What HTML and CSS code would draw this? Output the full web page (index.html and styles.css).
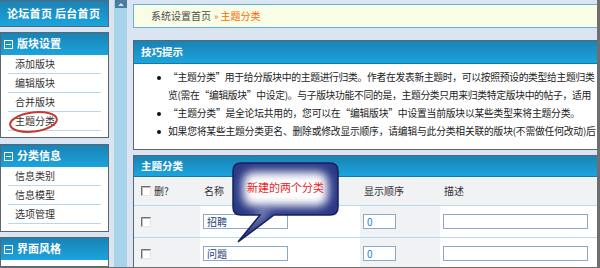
FILE: index.html
```html
<!DOCTYPE html>
<html lang="zh-CN">
<head>
  <meta charset="UTF-8">
  <title>主题分类 - 系统设置</title>
  <link rel="stylesheet" href="styles.css">
</head>
<body>
  <div class="frame">
    <aside class="side">
      <div class="topnav">论坛首页 后台首页</div>

      <div class="menu">
        <div class="menu-hd"><i class="fold"></i>版块设置</div>
        <ul class="menu-list">
          <li>添加版块</li>
          <li>编辑版块</li>
          <li>合并版块</li>
          <li>主题分类</li>
        </ul>
      </div>

      <div class="menu menu-short">
        <div class="menu-hd"><i class="fold"></i>分类信息</div>
        <ul class="menu-list">
          <li>信息类别</li>
          <li>信息模型</li>
          <li>选项管理</li>
        </ul>
      </div>

      <div class="menu">
        <div class="menu-hd"><i class="fold"></i>界面风格</div>
      </div>

      <!-- hand-drawn mark round the current item -->
      <svg class="mark" width="70" height="40" viewBox="0 0 70 40">
        <ellipse cx="33.5" cy="22" rx="23.5" ry="9.5" transform="rotate(-7 33.5 22)"
                 fill="none" stroke="#c43a30" stroke-width="2"/>
      </svg>
    </aside>

    <div class="split"><span class="split-bar"><i class="split-btn"></i></span></div>

    <main class="main">
      <div class="crumb">系统设置首页 <em><b>»</b> 主题分类</em></div>

      <div class="box">
        <div class="box-hd">技巧提示</div>
        <ul class="tips">
          <li class="long">“主题分类”用于给分版块中的主题进行归类。作者在发表新主题时，可以按照预设的类型给主题归类<br>览(需在“编辑版块”中设定)。与子版块功能不同的是，主题分类只用来归类特定版块中的帖子，适用</li>
          <li>“主题分类”是全论坛共用的，您可以在“编辑版块”中设置当前版块以某些类型来将主题分类。</li>
          <li>如果您将某些主题分类更名、删除或修改显示顺序，请编辑与此分类相关联的版块(不需做任何改动)后</li>
        </ul>
      </div>

      <div class="box box-table">
        <div class="box-hd">主题分类</div>
        <div class="grid">
          <div class="cell th"><span class="chk"></span>删?</div>
          <div class="cell th">名称</div>
          <div class="cell th">显示顺序</div>
          <div class="cell th">描述</div>

          <div class="cell alt"><span class="chk"></span></div>
          <div class="cell"><input class="ipt ipt-name" value="招聘"></div>
          <div class="cell alt"><input class="ipt ipt-num" value="0"></div>
          <div class="cell"><input class="ipt ipt-desc" value=""></div>

          <div class="cell alt"><span class="chk"></span></div>
          <div class="cell"><input class="ipt ipt-name" value="问题"></div>
          <div class="cell alt"><input class="ipt ipt-num" value="0"></div>
          <div class="cell"><input class="ipt ipt-desc" value=""></div>
        </div>
      </div>

      <div class="callout">
        <svg width="112" height="86" viewBox="0 0 112 86">
          <defs>
            <clipPath id="bubbleClip">
              <path id="bubblePath" d="M11 3H100Q108 3 108 11V47Q108 55 100 55H44L8 82L30 55H11Q3 55 3 47V11Q3 3 11 3Z"/>
            </clipPath>
            <filter id="soft" x="-30%" y="-30%" width="160%" height="160%">
              <feGaussianBlur stdDeviation="5"/>
            </filter>
          </defs>
          <use href="#bubblePath" fill="#2b3885"/>
          <g clip-path="url(#bubbleClip)">
            <rect x="13" y="12" width="85" height="34" rx="10" fill="#fff" filter="url(#soft)"/>
            <polygon points="32,50 40,50 16,74" fill="#c9cde8" filter="url(#soft)"/>
          </g>
          <use href="#bubblePath" fill="none" stroke="#18215c" stroke-width="1.5"/>
        </svg>
        <span class="callout-text">新建的两个分类</span>
      </div>
    </main>
  </div>
</body>
</html>
```

FILE: styles.css
```css
:root {
  --page: #dae5f1; --strip: #a7d4ea; --edge: #5b6670;
  --head-top: #1b82b4; --head-bot: #1aa4dd;
  --line: #b7d9ef; --cell: #f1f2f4;
  --text: #222; --muted: #4d4d4d; --orange: #ff6a00;
}

* { margin: 0; padding: 0; box-sizing: border-box; }

body {
  width: 600px; height: 268px; overflow: hidden;
  background: var(--page); color: var(--text);
  font: 10px/1.2 "Noto Sans CJK SC", "Liberation Sans", sans-serif;
}

.frame {
  display: flex; width: 600px; height: 268px; overflow: hidden;
  border-right: 3px solid #6e6e6e; border-bottom: 1px solid #6e6e6e;
}

/* sidebar */
.side {
  width: 110px; flex: none; position: relative;
  display: flex; flex-direction: column; gap: 5px;
}

.topnav {
  width: 109px; height: 27px; flex: none;
  display: flex; align-items: center; padding-left: 7px;
  background: linear-gradient(var(--head-top), var(--head-bot));
  border: 1px solid var(--edge); border-left: none;
  color: #fff; font-size: 11px; font-weight: 700; letter-spacing: 0.3px;
}

.menu {
  width: 109px; flex: none; background: #fff;
  border: 1px solid var(--edge); padding-bottom: 6px;
}
.menu-short { margin-top: 1px; padding-bottom: 7px; }

.menu-hd {
  height: 22px; display: flex; align-items: center; padding-left: 3px;
  background: linear-gradient(var(--head-top), var(--head-bot));
  color: #fff; font-size: 11px; font-weight: 700;
}

.fold {
  width: 9px; height: 9px; margin-right: 4px; border: 1px solid #fff;
  display: inline-flex; align-items: center; justify-content: center;
}
.fold::after { content: ''; width: 5px; height: 1px; background: #fff; }

.menu-list { list-style: none; }
.menu-list li {
  height: 19px; margin: 0 7px; padding-left: 7px;
  display: flex; align-items: center;
  border-bottom: 1px solid var(--line); color: #333;
}

.mark { position: absolute; left: 0; top: 100px; }

/* splitter */
.split { width: 18px; flex: none; padding-left: 4px; }
.split-bar { display: block; width: 13px; height: 100%; background: var(--strip); }
.split-btn {
  display: flex; justify-content: center; align-items: center;
  width: 12px; height: 8px; margin-left: 1px; background: #4d7aa0;
}
.split-btn::after {
  content: ''; border: 3px solid transparent; border-bottom-color: #cfe6f4; border-top: none;
}

/* main column */
.main {
  flex: 1; min-width: 0; position: relative;
  padding: 4px 0 0 5px;
}

.crumb {
  height: 24px; display: flex; align-items: center; padding-left: 17px;
  background: #fafde6; border: 1px solid #5fb5de; border-right: none;
  color: var(--muted); white-space: nowrap;
}
.crumb em { font-style: normal; color: var(--orange); margin-left: 3px; }
.crumb b { font-weight: 400; font-size: 9px; }

.box {
  margin-top: 12px; background: #fff;
  border: 1px solid var(--edge); border-right: none; overflow: hidden;
}
.box-table { margin-top: 5px; background: var(--cell); }

.box-hd {
  height: 23px; display: flex; align-items: center; padding-left: 7px;
  background: linear-gradient(var(--head-top), var(--head-bot));
  border-bottom: 1px solid #137aa8;
  color: #fff; font-size: 10.5px; font-weight: 700;
}
.box-table .box-hd { height: 21px; }

.tips {
  list-style: none; padding: 4px 0 9px 34px; white-space: nowrap;
  font-size: 9.8px; letter-spacing: -0.22px;
}
.tips li { line-height: 18px; text-indent: -11px; }
.tips li.long { letter-spacing: -0.32px; }
.tips li::before {
  content: ''; display: inline-block; width: 4px; height: 4px; margin-right: 7px;
  border-radius: 50%; background: #111; vertical-align: middle; text-indent: 0;
}

/* category grid */
.grid { display: grid; grid-template-columns: 66px 160px 80px 1fr; }
.cell {
  height: 32px; display: flex; align-items: center; padding-left: 3px;
  background: #fff; border-bottom: 1px solid var(--line); white-space: nowrap;
}
.cell.alt { background: var(--cell); padding-left: 7px; }
.cell.th { height: 29px; background: var(--cell); color: #333; padding-left: 4px; }
.cell.th:first-child { padding-left: 7px; }

.chk {
  width: 10px; height: 10px; margin-right: 3px; background: #fff;
  border: 1px solid; border-color: #707070 #e4e4e4 #e4e4e4 #707070;
  box-shadow: inset 1px 1px 0 #bdbdbd;
}

.ipt {
  height: 15px; padding: 0 3px; background: #fff;
  border: 1px solid #86a9cc; outline: none;
  font: 10px "Noto Sans CJK SC", "Liberation Sans", sans-serif; color: #1d3d72;
}
.ipt-name { width: 85px; }
.ipt-num { width: 33px; margin-left: -4px; color: #2a7fc0; }
.ipt-desc { width: 145px; }

/* annotation bubble */
.callout { position: absolute; left: 102px; top: 160px; width: 112px; height: 86px; }
.callout svg { display: block; }
.callout-text {
  position: absolute; left: 0; top: 21px; width: 111px; text-align: center;
  color: #ec1c24; font-size: 11px;
}
```
